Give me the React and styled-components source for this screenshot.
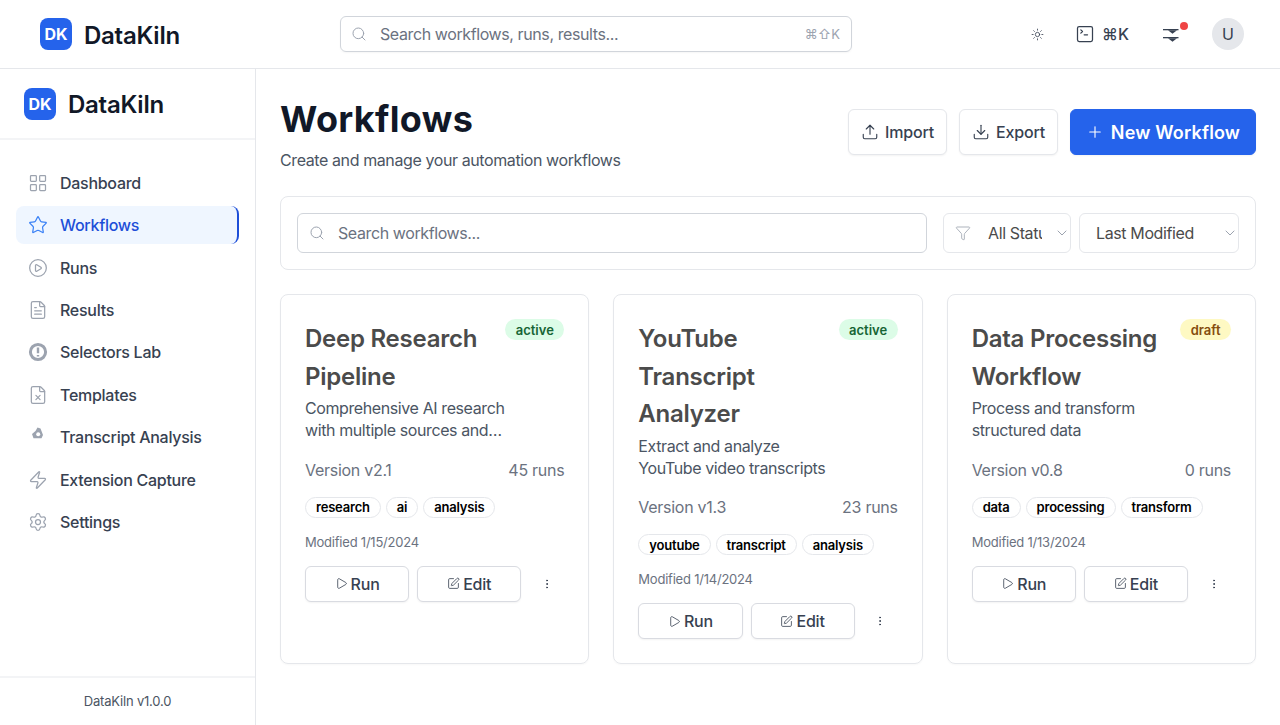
import React from 'react';
import styled, { createGlobalStyle } from 'styled-components';
import {
  LayoutGrid, Star, CirclePlay, FileText, FileX, Zap, Settings, Search, Sun, SquareTerminal,
  Upload, Download, Plus, Filter, ChevronDown, Play, SquarePen, EllipsisVertical,
} from 'lucide-react';

const GlobalStyle = createGlobalStyle`
  * { box-sizing: border-box; }
  html, body { margin: 0; padding: 0; height: 100%; background: #fff; }
  body { font-family: Inter, "Noto Sans", sans-serif; color: #111827; overflow: hidden; }
`;

const Page = styled.div`
  height: 725px;
  display: flex;
  flex-direction: column;
`;

const Header = styled.header`
  height: 69px;
  flex: none;
  display: flex;
  align-items: center;
  padding: 0 36px 0 40px;
  border-bottom: 1px solid #e5e7eb;
`;

const Brand = styled.div`
  display: flex;
  align-items: center;
  gap: 12px;
  width: ${(p) => p.$width || 'auto'};
  flex: none;
  font-size: 24px;
  font-weight: 600;
  letter-spacing: -0.25px;
  color: #111827;
`;

const BrandName = styled.span`
  padding-top: 2px;
`;

const Logo = styled.div`
  width: 32px;
  height: 32px;
  border-radius: 8px;
  background: #2563eb;
  color: #fff;
  font-size: 16px;
  font-weight: 700;
  letter-spacing: 0;
  display: flex;
  align-items: center;
  justify-content: center;
`;

const TopSearch = styled.div`
  width: 512px;
  height: 36px;
  flex: none;
  border: 1px solid #d1d5db;
  border-radius: 6px;
  display: flex;
  align-items: center;
  padding: 0 11px 0 10px;
  gap: 13px;
  color: #9ca3af;
  box-shadow: 0 1px 2px rgba(0, 0, 0, 0.04);
`;

const TopPlaceholder = styled.span`
  flex: 1;
  font-size: 16px;
  letter-spacing: -0.4px;
  color: #6b7280;
`;

const Shortcut = styled.span`
  font-size: 13px;
  color: #9ca3af;
`;

const Actions = styled.div`
  margin-left: auto;
  display: flex;
  align-items: center;
`;

const IconButton = styled.button`
  position: relative;
  border: 0;
  background: none;
  padding: 0;
  height: 32px;
  width: ${(p) => p.$width}px;
  margin-right: ${(p) => p.$gap || 0}px;
  display: flex;
  align-items: center;
  justify-content: center;
  gap: 7px;
  color: #374151;
  font-family: inherit;
  font-size: 16px;
  font-weight: 500;
`;

const Dot = styled.span`
  position: absolute;
  top: 4px;
  right: -1px;
  width: 8px;
  height: 8px;
  border-radius: 50%;
  background: #ef4444;
`;

const Avatar = styled.div`
  width: 32px;
  height: 32px;
  border-radius: 50%;
  background: #e5e7eb;
  color: #374151;
  font-size: 16px;
  display: flex;
  align-items: center;
  justify-content: center;
`;

const Body = styled.div`
  flex: 1;
  min-height: 0;
  display: flex;
`;

const Sidebar = styled.aside`
  width: 256px;
  flex: none;
  display: flex;
  flex-direction: column;
  border-right: 1px solid #e5e7eb;
`;

const SideBrand = styled.div`
  height: 71px;
  flex: none;
  padding: 0 24px;
  display: flex;
  align-items: center;
  border-bottom: 2px solid #f3f4f6;
`;

const Nav = styled.nav`
  flex: 1;
  padding: 23.7px 16px 0;
  display: flex;
  flex-direction: column;
  gap: 4px;
`;

const NavItem = styled.a`
  height: 38.4px;
  display: flex;
  align-items: center;
  gap: 12px;
  padding: 0 12px;
  border-radius: 8px;
  font-size: 16px;
  font-weight: 500;
  letter-spacing: -0.28px;
  color: ${(p) => (p.$active ? '#1d4ed8' : '#374151')};
  background: ${(p) => (p.$active ? '#eff6ff' : 'transparent')};
  border-right: 2px solid ${(p) => (p.$active ? '#1d4ed8' : 'transparent')};
  svg { color: ${(p) => (p.$active ? '#3b82f6' : '#9ca3af')}; flex: none; }
`;

const SideFooter = styled.div`
  height: 49px;
  flex: none;
  padding-bottom: 2px;
  border-top: 2px solid #f3f4f6;
  display: flex;
  align-items: center;
  justify-content: center;
  font-size: 13px;
  letter-spacing: -0.2px;
  color: #4b5563;
`;

const Main = styled.main`
  flex: 1;
  min-width: 0;
  padding: 24px;
`;

const TitleRow = styled.div`
  display: flex;
  justify-content: space-between;
  align-items: flex-start;
  margin-bottom: 24px;
`;

const PageTitle = styled.h1`
  margin: 0 0 3px;
  font-size: 36px;
  line-height: 52px;
  font-weight: 700;
  letter-spacing: 0.33px;
  color: #111827;
`;

const Subtitle = styled.p`
  margin: 0;
  font-size: 16px;
  line-height: 24px;
  letter-spacing: -0.4px;
  color: #4b5563;
`;

const HeadActions = styled.div`
  display: flex;
  gap: 12px;
  padding-top: 16px;
`;

const HeadButton = styled.button`
  height: 46px;
  display: flex;
  align-items: center;
  justify-content: center;
  gap: ${(p) => (p.$primary ? 7 : 6)}px;
  width: ${(p) => p.$width}px;
  border-radius: 6px;
  font-family: inherit;
  font-size: ${(p) => (p.$primary ? 18 : 16)}px;
  font-weight: ${(p) => (p.$primary ? 600 : 500)};
  letter-spacing: ${(p) => (p.$primary ? '0.17px' : '-0.2px')};
  color: ${(p) => (p.$primary ? '#fff' : '#374151')};
  background: ${(p) => (p.$primary ? '#2563eb' : '#fff')};
  border: 1px solid ${(p) => (p.$primary ? '#2563eb' : '#e5e7eb')};
  box-shadow: 0 1px 2px rgba(0, 0, 0, 0.05);
`;

const FilterBar = styled.div`
  height: 74px;
  display: flex;
  align-items: center;
  gap: 8px;
  padding: 0 16px;
  border: 1px solid #e5e7eb;
  border-radius: 8px;
  margin-bottom: 24px;
`;

const SearchWrap = styled.div`
  position: relative;
  flex: 1;
  margin-right: 8px;
  svg { position: absolute; left: 12px; top: 12px; color: #9ca3af; }
`;

const SearchInput = styled.input`
  width: 100%;
  height: 40px;
  padding: 0 12px 0 40px;
  border: 1px solid #d1d5db;
  border-radius: 6px;
  font-family: inherit;
  font-size: 16px;
  letter-spacing: -0.4px;
  color: #111827;
  outline: none;
  &::placeholder { color: #6b7280; opacity: 1; }
`;

const Select = styled.div`
  width: ${(p) => p.$width}px;
  height: 40px;
  flex: none;
  display: flex;
  align-items: center;
  padding-left: ${(p) => (p.$width > 140 ? 16 : 11)}px;
  border: 1px solid #e5e7eb;
  border-radius: 6px;
  font-size: 16px;
  letter-spacing: -0.38px;
  color: #4b4b4b;
  > svg:last-child { color: #9ca3af; flex: none; margin-left: auto; }
  > svg:first-child { color: #9ca3af; flex: none; margin-right: 17px; }
`;

const SelectText = styled.span`
  width: ${(p) => p.$width};
  overflow: hidden;
  white-space: nowrap;
`;

const CardGrid = styled.div`
  display: grid;
  grid-template-columns: repeat(3, 1fr);
  gap: 24px;
`;

const Card = styled.article`
  height: 370px;
  padding: 24px;
  border: 1px solid #e5e7eb;
  border-radius: 8px;
  box-shadow: 0 1px 2px rgba(0, 0, 0, 0.03);
`;

const CardTop = styled.div`
  display: flex;
  justify-content: space-between;
  align-items: flex-start;
`;

const CardHeading = styled.div`
  flex: 1;
  min-width: 0;
`;

const CardTitle = styled.h3`
  margin: 0 0 3.4px;
  padding-top: 1px;
  font-size: 24px;
  line-height: 37.5px;
  font-weight: 600;
  letter-spacing: -0.25px;
  color: #4b4b4b;
`;

const CardDesc = styled.p`
  margin: 0 -2px 0 0;
  font-size: 16px;
  line-height: 21.8px;
  letter-spacing: -0.4px;
  color: #4b5563;
  display: -webkit-box;
  -webkit-line-clamp: 2;
  -webkit-box-orient: vertical;
  overflow: hidden;
`;

const Badge = styled.span`
  flex: none;
  height: 21px;
  padding: 0 10.5px;
  display: inline-flex;
  align-items: center;
  border-radius: 999px;
  font-size: 13px;
  font-weight: 600;
  color: ${(p) => (p.$status === 'active' ? '#166534' : '#854d0e')};
  background: ${(p) => (p.$status === 'active' ? '#dcfce7' : '#fef9c3')};
`;

const MetaRow = styled.div`
  display: flex;
  justify-content: space-between;
  margin-top: 16px;
  font-size: 16px;
  line-height: 24px;
  letter-spacing: -0.28px;
  color: #6b7280;
`;

const Tags = styled.div`
  display: flex;
  gap: 5px;
  margin-top: 14.6px;
`;

const Tag = styled.span`
  height: 21px;
  padding: 0 10px;
  display: inline-flex;
  align-items: center;
  border: 1px solid #e5e7eb;
  border-radius: 999px;
  font-size: 13px;
  font-weight: 600;
  letter-spacing: -0.2px;
  color: #000;
`;

const Modified = styled.div`
  margin-top: 14px;
  font-size: 13px;
  line-height: 20px;
  letter-spacing: -0.22px;
  color: #6b7280;
`;

const CardActions = styled.div`
  display: flex;
  align-items: center;
  gap: 8px;
  margin-top: 14px;
`;

const CardButton = styled.button`
  flex: 1;
  height: 36px;
  display: flex;
  align-items: center;
  justify-content: center;
  gap: 3px;
  background: #fff;
  border: 1px solid #d9dbe1;
  border-radius: 6px;
  font-family: inherit;
  font-size: 16px;
  font-weight: 500;
  letter-spacing: -0.2px;
  color: #374151;
  box-shadow: 0 1px 2px rgba(0, 0, 0, 0.05);
`;

const MoreButton = styled.button`
  width: 35px;
  height: 36px;
  flex: none;
  border: 0;
  background: none;
  padding: 0;
  display: flex;
  align-items: center;
  justify-content: center;
  color: #374151;
`;

// not in lucide: thick circle with an exclamation mark
const SelectorIcon = () => (
  <svg width="20" height="20" viewBox="0 0 20 20" fill="none">
    <circle cx="10" cy="10" r="7.6" stroke="currentColor" strokeWidth="3" />
    <path d="M10 5.4v5.8M10 13v1.6" stroke="currentColor" strokeWidth="2.4" />
  </svg>
);

// small blobby glyph next to Transcript Analysis, sits high in its box
const TranscriptIcon = () => (
  <svg width="20" height="20" viewBox="0 1 20 20">
    <path d="M4 8 7.5 5l2-3.5 3 1L15 9l-1.5 3.2h-8z" fill="currentColor" />
    <circle cx="10.2" cy="8.2" r="2" fill="#fff" />
  </svg>
);

// two stacked lines with small triangles, next to the red dot
const AlertsIcon = () => (
  <svg width="16" height="16" viewBox="0 0 16 16" fill="#374151">
    <rect x="0" y="3" width="15.5" height="1.3" />
    <path d="M5 4.3h9L9.5 7.8z" />
    <rect x="0" y="11" width="15.5" height="1.3" />
    <path d="M5 12.3h9L9.5 15.8z" />
  </svg>
);

const navItems = [
  { label: 'Dashboard', icon: <LayoutGrid size={20} strokeWidth={1.5} /> },
  { label: 'Workflows', icon: <Star size={20} strokeWidth={1.5} />, active: true },
  { label: 'Runs', icon: <CirclePlay size={20} strokeWidth={1.5} /> },
  { label: 'Results', icon: <FileText size={20} strokeWidth={1.5} /> },
  { label: 'Selectors Lab', icon: <SelectorIcon /> },
  { label: 'Templates', icon: <FileX size={20} strokeWidth={1.5} /> },
  { label: 'Transcript Analysis', icon: <TranscriptIcon /> },
  { label: 'Extension Capture', icon: <Zap size={20} strokeWidth={1.5} /> },
  { label: 'Settings', icon: <Settings size={20} strokeWidth={1.5} /> },
];

const workflows = [
  {
    title: 'Deep Research Pipeline',
    desc: 'Comprehensive AI research with multiple sources and analysis of the results',
    status: 'active',
    version: 'v2.1',
    runs: 45,
    tags: ['research', 'ai', 'analysis'],
    modified: '1/15/2024',
  },
  {
    title: 'YouTube Transcript Analyzer',
    desc: 'Extract and analyze YouTube video transcripts',
    status: 'active',
    version: 'v1.3',
    runs: 23,
    tags: ['youtube', 'transcript', 'analysis'],
    modified: '1/14/2024',
  },
  {
    title: 'Data Processing Workflow',
    desc: 'Process and transform structured data',
    status: 'draft',
    version: 'v0.8',
    runs: 0,
    tags: ['data', 'processing', 'transform'],
    modified: '1/13/2024',
  },
];

function WorkflowCard({ item }) {
  return (
    <Card>
      <CardTop>
        <CardHeading>
          <CardTitle>{item.title}</CardTitle>
          <CardDesc>{item.desc}</CardDesc>
        </CardHeading>
        <Badge $status={item.status}>{item.status}</Badge>
      </CardTop>
      <MetaRow>
        <span>Version {item.version}</span>
        <span>{item.runs} runs</span>
      </MetaRow>
      <Tags>
        {item.tags.map((tag) => (
          <Tag key={tag}>{tag}</Tag>
        ))}
      </Tags>
      <Modified>Modified {item.modified}</Modified>
      <CardActions>
        <CardButton><Play size={13} strokeWidth={1.5} /> Run</CardButton>
        <CardButton><SquarePen size={13} strokeWidth={1.5} /> Edit</CardButton>
        <MoreButton><EllipsisVertical size={12} strokeWidth={2} /></MoreButton>
      </CardActions>
    </Card>
  );
}

export default function App() {
  return (
    <Page>
      <GlobalStyle />
      <Header>
        <Brand $width="300px"><Logo>DK</Logo><BrandName>DataKiln</BrandName></Brand>
        <TopSearch>
          <Search size={16} strokeWidth={1.5} />
          <TopPlaceholder>Search workflows, runs, results...</TopPlaceholder>
          <Shortcut>⌘⇧K</Shortcut>
        </TopSearch>
        <Actions>
          <IconButton $width={32} $gap={21}><Sun size={13} strokeWidth={1.5} /></IconButton>
          <IconButton $width={56} $gap={25}><SquareTerminal size={20} strokeWidth={1.5} />⌘K</IconButton>
          <IconButton $width={32} $gap={25}><AlertsIcon /><Dot /></IconButton>
          <Avatar>U</Avatar>
        </Actions>
      </Header>
      <Body>
        <Sidebar>
          <SideBrand><Brand><Logo>DK</Logo><BrandName>DataKiln</BrandName></Brand></SideBrand>
          <Nav>
            {navItems.map((item) => (
              <NavItem key={item.label} $active={item.active}>
                {item.icon}
                {item.label}
              </NavItem>
            ))}
          </Nav>
          <SideFooter>DataKiln v1.0.0</SideFooter>
        </Sidebar>
        <Main>
          <TitleRow>
            <div>
              <PageTitle>Workflows</PageTitle>
              <Subtitle>Create and manage your automation workflows</Subtitle>
            </div>
            <HeadActions>
              <HeadButton $width={99}><Upload size={18} strokeWidth={1.5} /> Import</HeadButton>
              <HeadButton $width={99}><Download size={18} strokeWidth={1.5} /> Export</HeadButton>
              <HeadButton $width={186} $primary><Plus size={18} strokeWidth={1.5} /> New Workflow</HeadButton>
            </HeadActions>
          </TitleRow>
          <FilterBar>
            <SearchWrap>
              <Search size={16} strokeWidth={1.5} />
              <SearchInput placeholder="Search workflows..." />
            </SearchWrap>
            <Select $width={128}>
              <Filter size={16} strokeWidth={1.25} />
              <SelectText $width="54px">All Status</SelectText>
              <ChevronDown size={16} strokeWidth={1.5} />
            </Select>
            <Select $width={160}>
              <SelectText>Last Modified</SelectText>
              <ChevronDown size={16} strokeWidth={1.5} />
            </Select>
          </FilterBar>
          <CardGrid>
            {workflows.map((item) => (
              <WorkflowCard key={item.title} item={item} />
            ))}
          </CardGrid>
        </Main>
      </Body>
    </Page>
  );
}
